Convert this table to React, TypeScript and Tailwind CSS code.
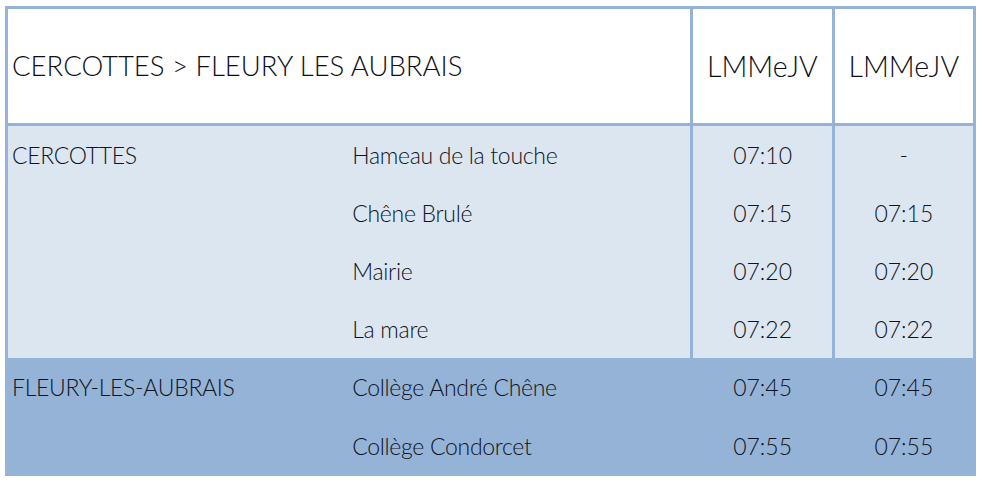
const font = { fontFamily: 'Lato, "Liberation Sans", sans-serif' };

type Row = { place?: string; stop: string; a: string; b: string };

const light: Row[] = [
  { place: 'CERCOTTES', stop: 'Hameau de la touche', a: '07:10', b: '-' },
  { stop: 'Chêne Brulé', a: '07:15', b: '07:15' },
  { stop: 'Mairie', a: '07:20', b: '07:20' },
  { stop: 'La mare', a: '07:22', b: '07:22' },
];

const dark: Row[] = [
  { place: 'FLEURY-LES-AUBRAIS', stop: 'Collège André Chêne', a: '07:45', b: '07:45' },
  { stop: 'Collège Condorcet', a: '07:55', b: '07:55' },
];

function TimeRow({ row, h, bg }: { row: Row; h: string; bg: string }) {
  return (
    <div className={`flex ${h} ${bg} items-center text-[23px] tracking-[-0.3px] font-light text-[#0f1420]`}>
      <div className="w-[341px] pl-1">{row.place ?? ''}</div>
      <div className="w-[340px] pl-[5px] self-stretch flex items-center border-r-[3px] border-[#95b3d7] box-content">
        {row.stop}
      </div>
      <div className="w-[139px] self-stretch flex items-center justify-center tracking-normal border-r-[3px] border-[#95b3d7] box-content">
        {row.a}
      </div>
      <div className="w-[139px] self-stretch flex items-center justify-center tracking-normal">{row.b}</div>
    </div>
  );
}

export default function App() {
  return (
    <div className="min-h-screen bg-white pt-[6px] pl-[5px]" style={font}>
      <div className="w-[971px] border-[3px] border-[#95b3d7] border-b-0 bg-white">
        {/* Header */}
        <div className="flex h-[114px] border-b-[3px] border-[#95b3d7] box-content text-[#0b0e16] font-light">
          <div className="w-[681px] pl-1 flex items-center text-[27.5px] border-r-[3px] border-[#95b3d7] box-content">
            CERCOTTES &gt; FLEURY LES AUBRAIS
          </div>
          <div className="w-[139px] flex items-center justify-center text-[28.5px] border-r-[3px] border-[#95b3d7] box-content">
            LMMeJV
          </div>
          <div className="w-[139px] flex items-center justify-center text-[28.5px]">LMMeJV</div>
        </div>

        {light.map((r, i) => (
          <TimeRow key={i} row={r} h="h-[58px]" bg="bg-[#dce6f1]" />
        ))}
        {dark.map((r, i) => (
          <TimeRow key={i} row={r} h="h-[59px]" bg="bg-[#95b3d7]" />
        ))}
      </div>
    </div>
  );
}
